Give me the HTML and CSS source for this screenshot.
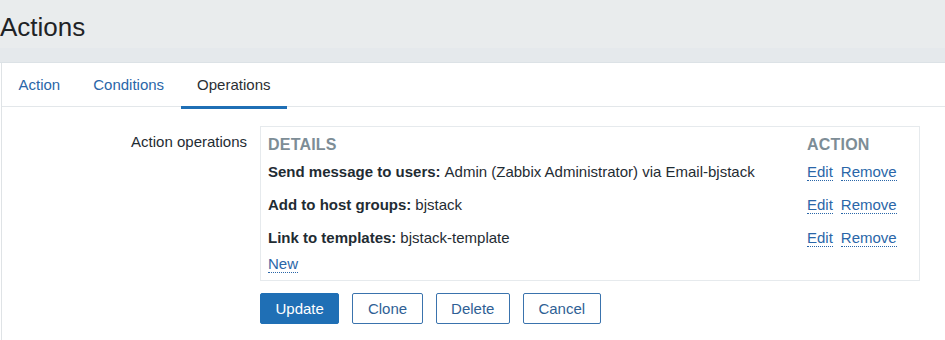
FILE: index.html
```html
<!DOCTYPE html>
<html lang="en">
<head>
<meta charset="utf-8">
<title>Actions</title>
<link rel="stylesheet" href="styles.css">
</head>
<body>
<header class="page-head">
  <h1 class="page-title">Actions</h1>
</header>
<div class="head-strip"></div>
<main class="panel">
  <ul class="tabs">
    <li class="tab"><a class="tab-link">Action</a></li>
    <li class="tab"><a class="tab-link">Conditions</a></li>
    <li class="tab tab-active"><a class="tab-link">Operations</a></li>
  </ul>
  <div class="form">
    <div class="form-label">Action operations</div>
    <div class="ops-box">
      <div class="ops-grid">
        <div class="ops-head">DETAILS</div>
        <div class="ops-head">ACTION</div>

        <div class="ops-cell"><b>Send message to users:</b> Admin (Zabbix Administrator) via Email-bjstack</div>
        <div class="ops-cell ops-actions"><a class="link">Edit</a><a class="link">Remove</a></div>

        <div class="ops-cell"><b>Add to host groups:</b> bjstack</div>
        <div class="ops-cell ops-actions"><a class="link">Edit</a><a class="link">Remove</a></div>

        <div class="ops-cell"><b>Link to templates:</b> bjstack-template</div>
        <div class="ops-cell ops-actions"><a class="link">Edit</a><a class="link">Remove</a></div>

        <div class="ops-new"><a class="link">New</a></div>
      </div>
    </div>
    <div class="buttons">
      <button class="btn btn-primary">Update</button>
      <button class="btn">Clone</button>
      <button class="btn">Delete</button>
      <button class="btn">Cancel</button>
    </div>
  </div>
</main>
</body>
</html>
```
FILE: styles.css
```css
* { box-sizing: border-box; }

html, body {
  margin: 0;
  padding: 0;
  background: #ffffff;
  font-family: "Liberation Sans", Arial, sans-serif;
  font-size: 15px;
  color: #1f2c33;
  overflow: hidden;
}

.page-head {
  height: 48px;
  background: #e9eced;
}

.page-title {
  margin: 0;
  padding-top: 6px;
  line-height: 42px;
  font-size: 26px;
  font-weight: normal;
  color: #1f2326;
}

.head-strip {
  height: 15px;
  background: #e5e9ec;
  border-bottom: 1px solid #dce2e6;
}

.panel {
  margin-left: 1px;
  border-left: 1px solid #dfe3e6;
  height: 277px;
  background: #fff;
}

.tabs {
  list-style: none;
  margin: 0;
  padding: 0;
  display: flex;
  align-items: flex-start;
  height: 44px;
  border-bottom: 1px solid #e3e7ea;
}

.tab {
  height: 46px;
  padding: 0 16.5px;
  line-height: 44px;
}

.tab-link {
  color: #2a66a8;
  cursor: pointer;
}

.tab-active {
  border-bottom: 3px solid #1f6fb5;
}

.tab-active .tab-link {
  color: #2b2f33;
}

.form {
  display: grid;
  grid-template-columns: 245px 660px;
  column-gap: 13px;
  row-gap: 12px;
  padding-top: 19px;
}

.form-label {
  text-align: right;
  padding-top: 7px;
  line-height: 18px;
  color: #1f2c33;
}

.ops-box {
  border: 1px solid #e6eaed;
  padding: 7px 8px 7px 7px;
}

.ops-grid {
  display: grid;
  grid-template-columns: 1fr 104px;
  grid-template-rows: 21px 33px 33px 33px 19px;
}

.ops-head {
  font-size: 16px;
  font-weight: bold;
  color: #7d8d96;
  line-height: 21px;
  letter-spacing: 0.2px;
}

.ops-cell {
  display: flex;
  align-items: center;
  white-space: nowrap;
}

.ops-cell b {
  margin-right: 4px;
}

.ops-actions {
  gap: 8px;
}

.ops-new {
  grid-column: 1 / 3;
  height: 19px;
  line-height: 19px;
}

.link {
  color: #2a66a8;
  border-bottom: 1px dotted #2a66a8;
  cursor: pointer;
  line-height: 17px;
  display: inline-block;
}

.buttons {
  grid-column: 2;
  display: flex;
  gap: 13px;
}

.btn {
  height: 31px;
  padding: 0 14.5px;
  font-family: "Liberation Sans", Arial, sans-serif;
  font-size: 15px;
  color: #2f5f95;
  background: #fff;
  border: 1px solid #3a73ad;
  border-radius: 2px;
}

.btn-primary {
  background: #1f6fb5;
  border-color: #1f6fb5;
  color: #fff;
}
```
